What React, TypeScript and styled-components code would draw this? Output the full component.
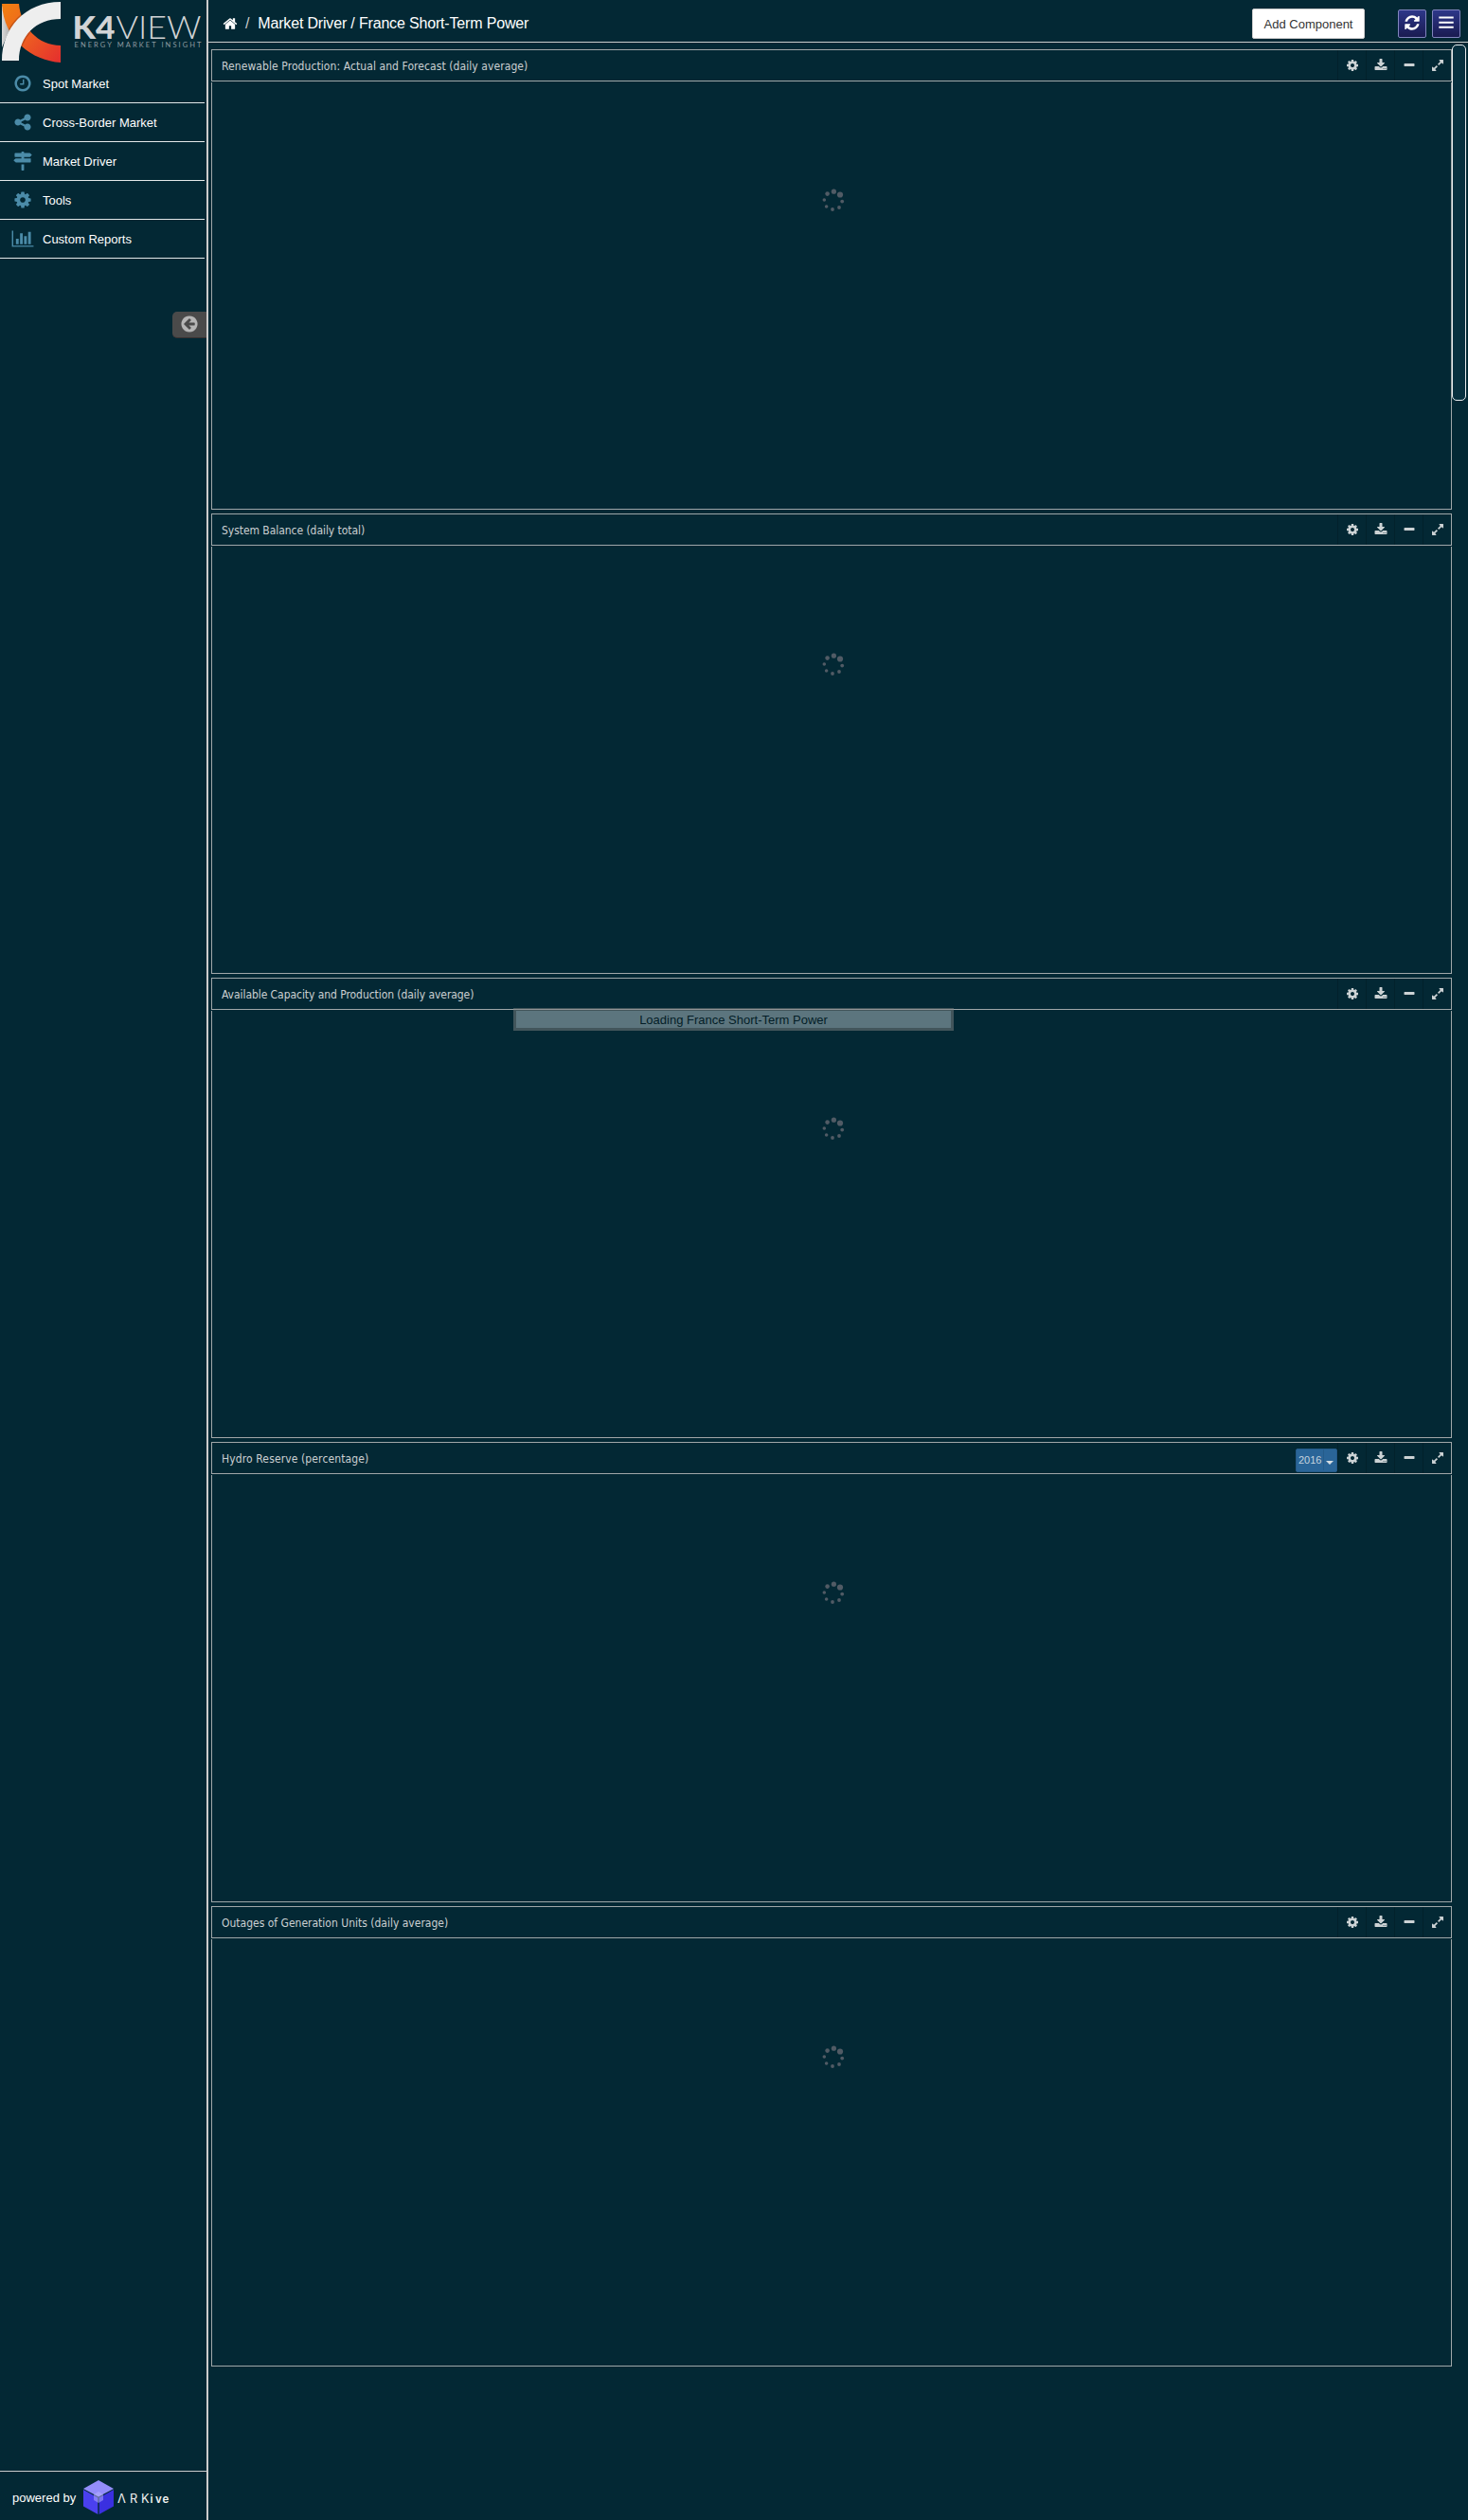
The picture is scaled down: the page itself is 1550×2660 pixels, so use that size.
import React from "react";
import styled, { createGlobalStyle } from "styled-components";

const paths = {
  refresh:
    "M1639 1056q0 5-1 7-64 268-268 434.5t-478 166.5q-146 0-282.5-55t-243.5-157l-129 129q-19 19-45 19t-45-19-19-45v-448q0-26 19-45t45-19h448q26 0 45 19t19 45-19 45l-137 137q71 66 161 102t187 36q134 0 250-65t186-179q11-17 53-117 8-23 30-23h192q13 0 22.5 9.5t9.5 22.5zm25-800v448q0 26-19 45t-45 19h-448q-26 0-45-19t-19-45 19-45l138-138q-148-137-349-137-134 0-250 65t-186 179q-11 17-53 117-8 23-30 23h-199q-13 0-22.5-9.5t-9.5-22.5v-7q65-268 270-434.5t480-166.5q146 0 284 55.5t245 156.5l130-129q19-19 45-19t45 19 19 45z",
  bars: "M128 256h1536v192h-1536zM128 768h1536v192h-1536zM128 1280h1536v192h-1536z",
  home:
    "M1472 992v480q0 26-19 45t-45 19h-384v-384h-256v384h-384q-26 0-45-19t-19-45v-480q0-1 .5-3t.5-3l575-474 575 474q1 2 1 6zm223-69l-62 74q-8 9-21 11h-3q-13 0-21-7l-692-577-692 577q-12 8-24 7-13-2-21-11l-62-74q-8-10-7-23.5t11-21.5l719-599q32-26 76-26t76 26l244 204v-195q0-14 9-23t23-9h192q14 0 23 9t9 23v408l219 182q10 8 11 21.5t-7 23.5z",
  clock:
    "M1024 544v448q0 14-9 23t-23 9h-320q-14 0-23-9t-9-23v-64q0-14 9-23t23-9h224v-352q0-14 9-23t23-9h64q14 0 23 9t9 23zm416 352q0-148-73-273t-198-198-273-73-273 73-198 198-73 273 73 273 198 198 273 73 273-73 198-198 73-273zm224 0q0 209-103 385.5t-279.5 279.5-385.5 103-385.5-103-279.5-279.5-103-385.5 103-385.5 279.5-279.5 385.5-103 385.5 103 279.5 279.5 103 385.5z",
  cog:
    "M1152 896q0-106-75-181t-181-75-181 75-75 181 75 181 181 75 181-75 75-181zm512-109v222q0 12-8 23t-20 13l-185 28q-19 54-39 91 35 50 107 138 10 12 10 25t-9 23q-27 37-99 108t-94 71q-12 0-26-9l-138-108q-44 23-91 38-16 136-29 186-7 28-36 28h-222q-14 0-24.5-8.5t-11.5-21.5l-28-184q-49-16-90-37l-141 107q-10 9-25 9-14 0-25-11-126-114-165-168-7-10-7-23 0-12 8-23 15-21 51-66.5t54-70.5q-27-50-41-99l-183-27q-13-2-21-12.5t-8-23.5v-222q0-12 8-23t19-13l186-28q14-46 39-92-40-57-107-138-10-12-10-24 0-10 9-23 26-36 98.5-107.5t94.5-71.5q13 0 26 10l138 107q44-23 91-38 16-136 29-186 7-28 36-28h222q14 0 24.5 8.5t11.5 21.5l28 184q49 16 90 37l142-107q9-9 24-9 13 0 25 10 129 119 165 170 7 8 7 22 0 12-8 23-15 21-51 66.5t-54 70.5q26 50 41 98l183 28q13 2 21 12.5t8 23.5z",
  share:
    "M1344 1024q133 0 226.5 93.5t93.5 226.5-93.5 226.5-226.5 93.5-226.5-93.5-93.5-226.5q0-12 2-34l-360-180q-92 86-218 86-133 0-226.5-93.5t-93.5-226.5 93.5-226.5 226.5-93.5q126 0 218 86l360-180q-2-22-2-34 0-133 93.5-226.5t226.5-93.5 226.5 93.5 93.5 226.5-93.5 226.5-226.5 93.5q-126 0-218-86l-360 180q2 22 2 34t-2 34l360 180q92-86 218-86z",
  signs:
    "M1745 297q10 10 10 23t-10 23l-141 141q-28 28-68 28h-1344q-26 0-45-19t-19-45v-256q0-26 19-45t45-19h576v-64q0-26 19-45t45-19h128q26 0 45 19t19 45v64h512q40 0 68 28zm-977 919h256v512q0 26-19 45t-45 19h-128q-26 0-45-19t-19-45v-512zm832-576q26 0 45 19t19 45v256q0 26-19 45t-45 19h-1344q-40 0-68-28l-141-141q-10-10-10-23t10-23l141-141q28-28 68-28h512v-192h256v192h576z",
  chart:
    "M-128 128h128v1408h1920v128h-2048zM256 896h256v512h-256zM640 384h256v1024h-256zM1024 640h256v768h-256zM1408 256h256v1152h-256z",
  back:
    "M1408 960v-128q0-26-19-45t-45-19h-502l189-189q19-19 19-45t-19-45l-91-91q-18-18-45-18t-45 18l-362 362-91 91q-18 18-18 45t18 45l91 91 362 362q18 18 45 18t45-18l91-91q18-18 18-45t-18-45l-189-189h502q26 0 45-19t19-45zm256-64q0 209-103 385.5t-279.5 279.5-385.5 103-385.5-103-279.5-279.5-103-385.5 103-385.5 279.5-279.5 385.5-103 385.5 103 279.5 279.5 103 385.5z",
  download:
    "M1344 1344q0-26-19-45t-45-19-45 19-19 45 19 45 45 19 45-19 19-45zm256 0q0-26-19-45t-45-19-45 19-19 45 19 45 45 19 45-19 19-45zm128-224v320q0 40-28 68t-68 28h-1472q-40 0-68-28t-28-68v-320q0-40 28-68t68-28h465l135 136q58 56 136 56t136-56l136-136h464q40 0 68 28t28 68zm-325-569q17 41-14 70l-448 448q-18 19-45 19t-45-19l-448-448q-31-29-14-70 17-39 59-39h256v-448q0-26 19-45t45-19h256q26 0 45 19t19 45v448h256q42 0 59 39z",
  minus:
    "M1600 736v192q0 40-28 68t-68 28h-1216q-40 0-68-28t-28-68v-192q0-40 28-68t68-28h1216q40 0 68 28t28 68z",
  expand:
    "M883 1056q0 13-10 23l-332 332 144 144q19 19 19 45t-19 45-45 19h-448q-26 0-45-19t-19-45v-448q0-26 19-45t45-19 45 19l144 144 332-332q10-10 23-10t23 10l114 114q10 10 10 23zm781-864v448q0 26-19 45t-45 19-45-19l-144-144-332 332q-10 10-23 10t-23-10l-114-114q-10-10-10-23t10-23l332-332-144-144q-19-19-19-45t19-45 45-19h448q26 0 45 19t19 45z",
};

type IconName = keyof typeof paths;

const IconSvg = styled.svg`
  display: block;
  flex: none;
  overflow: visible;
  fill: currentColor;
`;

const Icon = ({ name, size }: { name: IconName; size: number }) => (
  <IconSvg width={size} height={size} viewBox="0 0 1792 1792">
    <path d={paths[name]} />
  </IconSvg>
);

const GlobalStyle = createGlobalStyle`
  *, *::before, *::after { box-sizing: border-box; }
  body {
    margin: 0;
    background: #032834;
    color: #fff;
    font-family: "Liberation Sans", Arial, sans-serif;
    font-size: 13px;
  }
`;

const Page = styled.div`
  display: flex;
  width: 1550px;
  height: 2660px;
  overflow: hidden;
  position: relative;
`;

const Sidebar = styled.aside`
  display: flex;
  flex-direction: column;
  width: 220px;
  flex: none;
  border-right: 2px solid #ccc;
`;

const Brand = styled.div`
  height: 68px;
  svg { display: block; overflow: visible; }
`;

const MenuItem = styled.a`
  display: flex;
  align-items: center;
  width: 216px;
  height: 41px;
  border-bottom: 1px solid #e4e8e9;
  white-space: nowrap;
`;

const MenuIcon = styled.span`
  display: flex;
  justify-content: center;
  width: 45px;
  padding-left: 2px;
  color: #4b8ba8;
`;

const Collapse = styled.button`
  display: flex;
  align-items: center;
  justify-content: center;
  align-self: flex-end;
  width: 36px;
  height: 28px;
  margin-top: 56px;
  padding: 0 0 1px;
  border: 0;
  border-bottom: 1px solid #3a3232;
  border-radius: 5px 0 0 5px;
  background: #4a4a4a;
  color: #b5b5b5;
`;

const PoweredBy = styled.footer`
  display: flex;
  align-items: center;
  height: 52px;
  margin-top: auto;
  padding: 3px 0 0 13px;
  border-top: 1px solid #ccc;
  svg { display: block; margin-left: 7px; overflow: visible; }
`;

const Main = styled.main`
  flex: 1;
  min-width: 0;
  display: flex;
  flex-direction: column;
`;

const TopBar = styled.header`
  display: flex;
  align-items: center;
  height: 45px;
  padding: 6px 8px 0 15px;
  border-bottom: 1px solid #ccc;
`;

const Crumbs = styled.nav`
  display: flex;
  align-items: center;
  flex: 1;
  font-size: 16px;
  line-height: 18px;
  letter-spacing: -0.17px;
  white-space: nowrap;
`;

const Slash = styled.span`
  margin: 0 9px 0 8px;
  color: #ccc;
`;

const AddButton = styled.button`
  width: 119px;
  height: 32px;
  margin-right: 35px;
  padding: 0;
  border: 1px solid #ccc;
  border-radius: 2px;
  background: #fff;
  color: #333;
  font: 13px "Liberation Sans", Arial, sans-serif;
`;

const SquareButton = styled.button`
  display: flex;
  align-items: center;
  justify-content: center;
  width: 30px;
  height: 30px;
  padding: 0 0 2px;
  border: 1px solid #8185bd;
  border-radius: 2px;
  background: linear-gradient(#2d3789, #1a1b51);
  color: #fff;
  & + & { margin-left: 6px; }
`;

const Scroller = styled.div`
  display: flex;
  flex: 1;
  padding: 2px 2px 0 3px;
`;

const Panels = styled.div`
  display: flex;
  flex-direction: column;
  gap: 4px;
  width: 1310px;
  padding-top: 5px;
`;

const ScrollThumb = styled.div`
  width: 15px;
  height: 376px;
  border: 1px solid #e8ecee;
  border-radius: 5px;
  background: #07303f;
`;

const Panel = styled.section`
  display: flex;
  flex-direction: column;
  height: 486px;
`;

const PanelHeader = styled.div`
  display: flex;
  height: 34px;
  margin-bottom: 1px;
  border: 1px solid #a0a7a9;
`;

const PanelTitle = styled.h2<{ $tracking: number }>`
  flex: 1;
  margin: 0;
  padding: 1px 0 0 10px;
  color: #ccd0d2;
  font: 400 12px/33px "DejaVu Sans Condensed", "DejaVu Sans", sans-serif;
  font-stretch: condensed;
  letter-spacing: ${(p) => p.$tracking}px;
  white-space: nowrap;
`;

const Tool = styled.span`
  display: flex;
  align-items: center;
  justify-content: center;
  width: 30px;
  border-left: 1px solid #02212b;
  color: #ccd2d4;
`;

const YearSelect = styled.div`
  display: flex;
  align-items: center;
  width: 44px;
  height: 25px;
  margin: 6px 0 0;
  padding-bottom: 1px;
  border: 1px solid #245a88;
  border-radius: 2px;
  background: #2a6598;
  color: #c5d4df;
  font-size: 11px;
`;

const YearValue = styled.span`
  width: 29px;
  padding-left: 2px;
  border-right: 1px solid #255b8a;
  line-height: 22px;
`;

const Caret = styled.span`
  margin: 6px 0 0 2px;
  border: 4px solid transparent;
  border-top-color: #d5dde3;
  border-bottom: 0;
`;

const PanelBody = styled.div`
  flex: 1;
  padding: 112px 0 0 644px;
  border: 1px solid #a0a7a9;
  border-top: 0;
`;

const Loading = styled.div`
  position: absolute;
  left: 542px;
  top: 1064px;
  width: 465px;
  height: 24px;
  border: 3px solid rgba(130, 130, 130, 0.5);
  background: rgba(182, 194, 199, 0.5);
  background-clip: padding-box;
  color: #031d27;
  line-height: 19px;
  text-align: center;
`;

const Spinner = () => (
  <svg width="24" height="24" viewBox="0 0 24 24" fill="#515b65" display="block">
    <circle cx="12.4" cy="3.2" r="2.6" />
    <circle cx="19" cy="6.5" r="3.1" />
    <circle cx="21.2" cy="13.6" r="1.9" />
    <circle cx="18" cy="20" r="1.9" />
    <circle cx="11" cy="22" r="1.9" />
    <circle cx="4.6" cy="19" r="1.8" />
    <circle cx="2.3" cy="12" r="1.8" />
    <circle cx="5.6" cy="5.6" r="2.3" />
  </svg>
);

const K4Logo = () => (
  <svg width="218" height="68" viewBox="0 0 218 68">
    <defs>
      <linearGradient id="flame" gradientUnits="userSpaceOnUse" x1="4" y1="10" x2="64" y2="60">
        <stop offset="0" stopColor="#f07d12" />
        <stop offset="0.4" stopColor="#ee6420" />
        <stop offset="1" stopColor="#e5322d" />
      </linearGradient>
      <linearGradient id="shade" x1="0" y1="0" x2="1" y2="0">
        <stop offset="0" stopColor="#d9d9d9" />
        <stop offset="1" stopColor="#a5a5a5" />
      </linearGradient>
      <clipPath id="ribbon">
        <path d="M2 4H20C22 28 40 48 64 48V66C34 64 4 42 2 4Z" />
      </clipPath>
    </defs>
    <path d="M2 5L12 28L2 50Z" fill="url(#shade)" />
    <path d="M2 4H20C22 28 40 48 64 48V66C34 64 4 42 2 4Z" fill="url(#flame)" />
    <path
      d="M2 64C2 30 26 2 64 2V20C38 20 20 38 20 64Z"
      fill="none"
      stroke="#7a2b10"
      strokeOpacity=".35"
      strokeWidth="3"
      clipPath="url(#ribbon)"
    />
    <path d="M2 64C2 30 26 2 64 2V20C38 20 20 38 20 64Z" fill="#eee" />
    <g fontFamily="Lato, sans-serif" fill="#d2d4d6">
      <text x="76.5" y="41" fontSize="33" fontWeight="900" textLength="45" lengthAdjust="spacingAndGlyphs">K4</text>
      <text x="122.500" y="41" fontSize="33" fontWeight="300" textLength="90" lengthAdjust="spacingAndGlyphs">VIEW</text>
      <text x="78.5" y="49.5" fontSize="7.5" fill="#8e9ba1" textLength="134">ENERGY MARKET INSIGHT</text>
    </g>
  </svg>
);

const ArkiveLogo = () => (
  <svg width="92" height="38" viewBox="0 0 92 38">
    <path d="M17 1L33 10L17 18.500L1 10Z" fill="#938dfb" />
    <path d="M1 11L16.300 19.500V37L1 28.500Z" fill="#4a40ee" />
    <path d="M33 11L17.700 19.500V37L33 28.500Z" fill="#3a30e0" />
    <path d="M17 13L22 16V22L17 25L12 22V16Z" fill="#b9b4ff" opacity=".5" />
    <g fill="#f2f2f2" fontFamily="Inter, sans-serif">
      <text x="37 50 62" y="24.500" fontSize="12.800">ΛRK</text>
      <text x="71.500 77 84.500" y="24.500" fontSize="11.500" fontWeight="600">ive</text>
    </g>
  </svg>
);

const menu: { icon: IconName; label: string }[] = [
  { icon: "clock", label: "Spot Market" },
  { icon: "share", label: "Cross-Border Market" },
  { icon: "signs", label: "Market Driver" },
  { icon: "cog", label: "Tools" },
  { icon: "chart", label: "Custom Reports" },
];

const panels: { title: string; tracking: number; year?: string }[] = [
  { title: "Renewable Production: Actual and Forecast (daily average)", tracking: 0.08 },
  { title: "System Balance (daily total)", tracking: -0.05 },
  { title: "Available Capacity and Production (daily average)", tracking: -0.06 },
  { title: "Hydro Reserve (percentage)", tracking: 0.12, year: "2016" },
  { title: "Outages of Generation Units (daily average)", tracking: 0 },
];

const tools: IconName[] = ["cog", "download", "minus", "expand"];

export default function App() {
  return (
    <>
      <GlobalStyle />
      <Page>
        <Sidebar>
          <Brand><K4Logo /></Brand>
          {menu.map((m) => (
            <MenuItem key={m.label}>
              <MenuIcon><Icon name={m.icon} size={20} /></MenuIcon>
              {m.label}
            </MenuItem>
          ))}
          <Collapse><Icon name="back" size={20} /></Collapse>
          <PoweredBy>
            powered by
            <ArkiveLogo />
          </PoweredBy>
        </Sidebar>
        <Main>
          <TopBar>
            <Crumbs>
              <Icon name="home" size={16} />
              <Slash>/</Slash>
              Market Driver / France Short-Term Power
            </Crumbs>
            <AddButton>Add Component</AddButton>
            <SquareButton><Icon name="refresh" size={18} /></SquareButton>
            <SquareButton><Icon name="bars" size={18} /></SquareButton>
          </TopBar>
          <Scroller>
            <Panels>
              {panels.map((p) => (
                <Panel key={p.title}>
                  <PanelHeader>
                    <PanelTitle $tracking={p.tracking}>{p.title}</PanelTitle>
                    {p.year && (
                      <YearSelect>
                        <YearValue>{p.year}</YearValue>
                        <Caret />
                      </YearSelect>
                    )}
                    {tools.map((t) => (
                      <Tool key={t}><Icon name={t} size={14} /></Tool>
                    ))}
                  </PanelHeader>
                  <PanelBody><Spinner /></PanelBody>
                </Panel>
              ))}
            </Panels>
            <ScrollThumb />
          </Scroller>
        </Main>
        <Loading>Loading France Short-Term Power</Loading>
      </Page>
    </>
  );
}
